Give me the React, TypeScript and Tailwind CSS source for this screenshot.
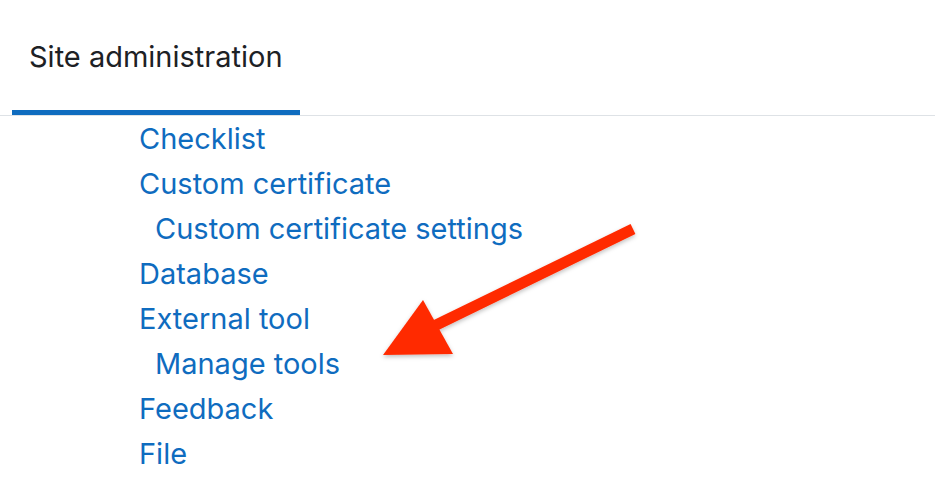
import React from 'react';

const items: { label: string; indent?: boolean }[] = [
  { label: 'Checklist' },
  { label: 'Custom certificate' },
  { label: 'Custom certificate settings', indent: true },
  { label: 'Database' },
  { label: 'External tool' },
  { label: 'Manage tools', indent: true },
  { label: 'Feedback' },
  { label: 'File' },
];

const App: React.FC = () => {
  return (
    <div className="relative w-[935px] h-[479px] bg-white overflow-hidden" style={{ fontFamily: 'Inter, "Noto Sans", sans-serif' }}>
      <div className="border-b border-[#dee2e6] h-[116px]">
        <div className="ml-[12px] w-[288px] h-[115px] border-b-[5px] border-[#0f6cbf] flex items-center pl-[17px] pt-[3px]">
          <span className="text-[29px] text-[#1d2125]">Site administration</span>
        </div>
      </div>
      <ul className="pl-[139px]">
        {items.map(item => (
          <li
            key={item.label}
            className={`h-[45px] leading-[45px] text-[29px] text-[#0f6cbf] ${item.indent ? 'pl-[16px]' : ''}`}
          >
            {item.label}
          </li>
        ))}
      </ul>

      {/* annotation arrow */}
      <svg className="absolute left-0 top-0 pointer-events-none" width="935" height="479" viewBox="0 0 935 479">
        <defs>
          <filter id="sh" x="-20%" y="-20%" width="140%" height="140%">
            <feDropShadow dx="0" dy="2" stdDeviation="2" floodColor="#000" floodOpacity="0.25" />
          </filter>
        </defs>
        <g filter="url(#sh)" fill="#ff2a00">
          <line x1="633" y1="229" x2="430" y2="328" stroke="#ff2a00" strokeWidth="11" strokeLinecap="butt" />
          <polygon points="383,355 423,300 453,354" />
        </g>
      </svg>
    </div>
  );
};

export default App;
